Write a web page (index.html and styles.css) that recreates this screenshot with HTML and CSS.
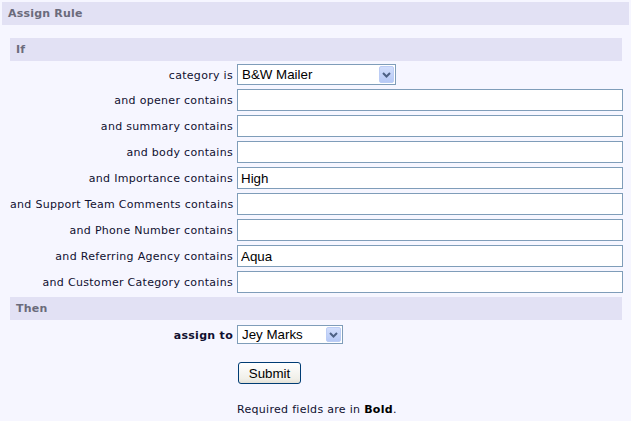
FILE: index.html
```html
<!DOCTYPE html>
<html>
<head>
<meta charset="utf-8">
<title>Assign Rule</title>
<link rel="stylesheet" href="styles.css">
</head>
<body>
<div class="title">Assign Rule</div>
<form class="panel">
  <div class="band">If</div>
  <div class="grid">
    <label class="lbl lbl-sel">category is</label>
    <div class="sel sel-cat">
      <select class="sel-input"><option>B&amp;W Mailer</option></select>
      <span class="sel-btn"><svg width="9" height="6" viewBox="0 0 9 6"><path d="M1 1 L4.5 4.5 L8 1" fill="none" stroke="#4d6185" stroke-width="2"/></svg></span>
    </div>

    <label class="lbl">and opener contains</label>
    <input class="txt" type="text">
    <label class="lbl">and summary contains</label>
    <input class="txt" type="text">
    <label class="lbl">and body contains</label>
    <input class="txt" type="text">
    <label class="lbl">and Importance contains</label>
    <input class="txt" type="text" value="High">
    <label class="lbl">and Support Team Comments contains</label>
    <input class="txt" type="text">
    <label class="lbl">and Phone Number contains</label>
    <input class="txt" type="text">
    <label class="lbl">and Referring Agency contains</label>
    <input class="txt" type="text" value="Aqua">
    <label class="lbl">and Customer Category contains</label>
    <input class="txt" type="text">
  </div>
  <div class="band">Then</div>
  <div class="grid grid-then">
    <label class="lbl lbl-assign">assign to</label>
    <div class="sel sel-assign">
      <select class="sel-input"><option>Jey Marks</option></select>
      <span class="sel-btn"><svg width="9" height="6" viewBox="0 0 9 6"><path d="M1 1 L4.5 4.5 L8 1" fill="none" stroke="#4d6185" stroke-width="2"/></svg></span>
    </div>
    <span></span>
    <div class="submit-cell"><button class="btn" type="button">Submit</button></div>
    <span></span>
    <p class="note">Required fields are in <b>Bold</b>.</p>
  </div>
</form>
</body>
</html>
```

FILE: styles.css
```css
html, body {
  background: #f6f6ff;
}
body {
  margin: 2px;
  font-family: "DejaVu Sans", Verdana, sans-serif;
  font-size: 11px;
  color: #101030;
}
.title {
  height: 23px;
  line-height: 23px;
  background: #e2e1f4;
  color: #6b6b7b;
  font-weight: bold;
  padding-left: 6px;
  letter-spacing: 0.2px;
}
.panel {
  margin: 0;
  padding: 13px 7px 0 8px;
}
.band {
  height: 23px;
  line-height: 23px;
  background: #e2e1f4;
  color: #6b6b7b;
  font-weight: bold;
  padding-left: 6px;
  letter-spacing: 0.2px;
}
.grid {
  display: grid;
  grid-template-columns: 223px 386px;
  column-gap: 4px;
  grid-auto-rows: 26px;
  align-items: start;
  margin-top: 1px;
  margin-bottom: 1px;
}
.lbl {
  text-align: right;
  white-space: nowrap;
  letter-spacing: 0.3px;
  margin-top: 2px;
  height: 22px;
  line-height: 22px;
}
.lbl-sel {
  margin-top: 3px;
  height: 21px;
  line-height: 21px;
}
.txt {
  box-sizing: border-box;
  width: 386px;
  height: 22px;
  margin: 1px 0 0 0;
  border: 1px solid #7f9db9;
  background: #fff;
  padding: 0 3px;
  font-family: "Liberation Sans", Arial, sans-serif;
  font-size: 13.33px;
  color: #000;
  outline: none;
}
.sel {
  position: relative;
  box-sizing: border-box;
  height: 21px;
  margin-top: 2px;
  border: 1px solid #7f9db9;
  background: #fff;
}
.sel-cat { width: 159px; }
.sel-assign { width: 106px; height: 19px; margin-top: 4px; }
.sel-input {
  appearance: none;
  -webkit-appearance: none;
  border: none;
  background: transparent;
  width: 100%;
  height: 100%;
  margin: 0;
  padding: 0 0 0 4px;
  font-family: "Liberation Sans", Arial, sans-serif;
  font-size: 13.33px;
  color: #000;
  outline: none;
}
.sel-btn {
  position: absolute;
  top: 1px;
  right: 1px;
  bottom: 1px;
  width: 15px;
  box-sizing: border-box;
  border: 1px solid #bccdf5;
  border-radius: 2px;
  background: linear-gradient(#d2defc, #b6c9f6);
  display: flex;
  align-items: center;
  justify-content: center;
  pointer-events: none;
}
.lbl-assign {
  font-weight: bold;
  margin-top: 5px;
  height: 19px;
  line-height: 19px;
}
.grid-then {
  grid-template-rows: 26px 41px auto;
}
.submit-cell {
  padding-top: 15px;
}
.btn {
  box-sizing: border-box;
  width: 63px;
  height: 22px;
  margin: 0 0 0 1px;
  padding: 0;
  border: 1px solid #003c74;
  border-radius: 3px;
  background: linear-gradient(#ffffff, #f0efe8 80%, #e3e1d6);
  font-family: "Liberation Sans", Arial, sans-serif;
  font-size: 13.33px;
  color: #000;
}
.note {
  margin: 0;
  padding-top: 15px;
  line-height: 13px;
  letter-spacing: 0.3px;
}
.note b {
  color: #000;
}
```
